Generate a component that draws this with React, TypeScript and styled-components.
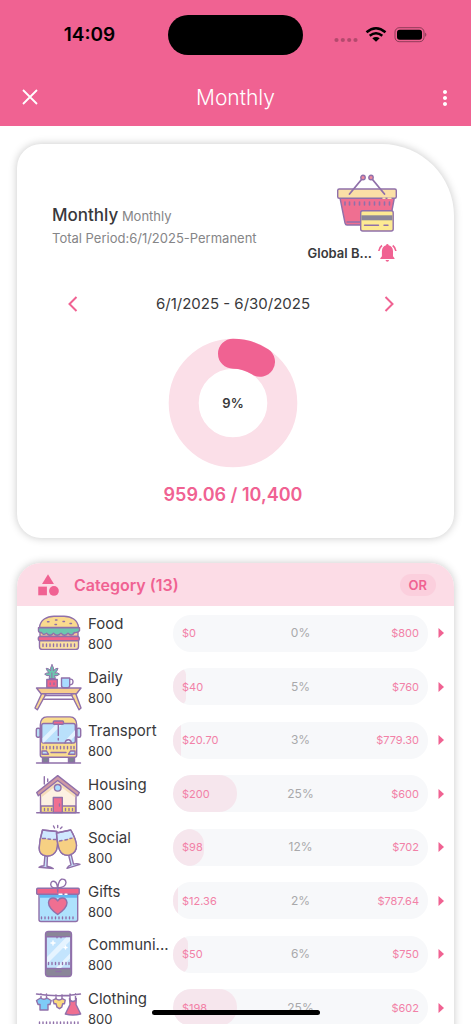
import React from "react";
import styled, { createGlobalStyle } from "styled-components";
import { MdCategory, MdMoreVert } from "react-icons/md";

const pink = "#f06292";
const ink = "#39393b";
const outline = "#9070aa";

const GlobalStyle = createGlobalStyle`
  *, *::before, *::after { box-sizing: border-box; }
  body {
    margin: 0;
    background: #fff;
    color: ${ink};
    font-family: Inter, "Liberation Sans", sans-serif;
  }
  button { border: 0; padding: 0; background: none; font: inherit; color: inherit; cursor: pointer; }
  h1, h2, h3, p, ul { margin: 0; padding: 0; }
  svg { display: block; flex: none; }
`;

const Screen = styled.div`
  display: flex;
  flex-direction: column;
  height: 100vh;
  overflow: hidden;
`;

const Header = styled.header`
  flex: none;
  background: ${pink};
`;

const StatusBar = styled.div`
  display: grid;
  grid-template-columns: 1fr 135px 1fr;
  align-items: center;
  height: 70px;
  color: #000;
`;

const Clock = styled.time`
  padding-left: 11px;
  text-align: center;
  font-size: 19px;
  line-height: 24px;
  font-weight: 600;
`;

const Island = styled.div`
  height: 40px;
  border-radius: 20px;
  background: #000;
`;

const StatusIcons = styled.div`
  display: flex;
  align-items: center;
  justify-content: flex-end;
  padding-right: 44px;
`;

const AppBar = styled.div`
  display: flex;
  align-items: center;
  justify-content: space-between;
  height: 56px;
  padding: 0 14px;
  color: #fff;
`;

const IconButton = styled.button<{ $width?: number; $align?: string }>`
  display: flex;
  flex: none;
  align-items: center;
  justify-content: ${(p) => p.$align ?? "center"};
  width: ${(p) => p.$width ?? 24}px;
  height: 24px;
`;

const Title = styled.h1`
  text-align: center;
  font-size: 21px;
  line-height: 28px;
  font-weight: 300;
`;

const Main = styled.main`
  display: flex;
  flex: 1;
  flex-direction: column;
  gap: 25px;
  min-height: 0;
  padding: 18px 17px 0;
  overflow-y: auto;
  scrollbar-width: none;
`;

const Card = styled.section`
  flex: none;
  border-radius: 24px;
  background: #fff;
  box-shadow: 0 0 8px rgba(0, 0, 0, 0.22);
`;

const SummaryCard = styled(Card)`
  display: flex;
  flex-direction: column;
  border-top-right-radius: 72px;
  padding: 30px 40px 31px 35px;
`;

const SummaryTop = styled.div`
  display: flex;
  align-items: center;
  justify-content: space-between;
  padding-right: 16px;
`;

const Heading = styled.div`
  padding-top: 16px;
  color: #858587;
  font-size: 13px;
  line-height: 22px;
`;

const BudgetName = styled.h2`
  display: inline;
  color: ${ink};
  font-size: 17px;
  font-weight: 500;
`;

const Scope = styled.div`
  display: flex;
  flex-direction: column;
  align-items: flex-end;
  gap: 8px;
`;

const ScopeLabel = styled.div`
  display: flex;
  align-items: center;
  gap: 5px;
  height: 18px;
  font-size: 13px;
  font-weight: 600;
`;

const PeriodNav = styled.nav`
  display: flex;
  align-items: center;
  justify-content: space-between;
  margin-top: 30px;
  padding: 0 10px;
  font-size: 15px;
  line-height: 24px;
`;

const DonutBox = styled.div`
  display: grid;
  place-items: center;
  margin-top: 22px;
  > * { grid-area: 1 / 1; }
`;

const DonutLabel = styled.span`
  font-size: 13px;
  line-height: 20px;
  font-weight: 600;
`;

const Total = styled.p`
  margin-top: 15px;
  text-align: center;
  color: ${pink};
  font-size: 18px;
  line-height: 24px;
  font-weight: 600;
`;

const CategoryHeader = styled.header`
  display: flex;
  align-items: center;
  height: 43px;
  padding: 0 18px;
  border-radius: 24px 24px 0 0;
  background: #fcdce6;
  color: ${pink};
`;

const CategoryTitle = styled.h2`
  flex: 1;
  padding-left: 13px;
  font-size: 16px;
  line-height: 20px;
  font-weight: 600;
`;

const OrButton = styled.button`
  height: 22px;
  padding: 0 9px;
  border-radius: 11px;
  background: #fbcfdd;
  font-size: 13px;
  font-weight: 600;
`;

const List = styled.ul`
  padding-bottom: 40px;
  list-style: none;
`;

const Row = styled.li`
  display: grid;
  grid-template-columns: 48px 87px 1fr 6px;
  align-items: center;
  height: 54px;
  padding: 0 10px 0 17px;

  &:nth-child(even) {
    height: 53px;
  }
`;

const RowText = styled.div`
  padding: 2px 0 0 6px;
  font-size: 13px;
  line-height: 20px;
  white-space: nowrap;
`;

const RowName = styled.h3`
  font-size: 15px;
  font-weight: 400;
`;

const Bar = styled.div`
  position: relative;
  display: grid;
  grid-template-columns: 1fr 1fr 1fr;
  align-items: center;
  height: 37px;
  margin: 0 10px 0 4px;
  padding: 0 9px;
  overflow: hidden;
  border-radius: 18px;
  background: #f7f8fa;
  isolation: isolate;
`;

const Fill = styled.span`
  position: absolute;
  z-index: -1;
  inset: 0 auto 0 0;
  border-radius: 18px;
  background: #f6e6ed;
`;

const Amount = styled.span<{ $end?: boolean }>`
  text-align: ${(p) => (p.$end ? "right" : "left")};
  color: #f281a7;
  font-size: 11px;
  line-height: 16px;
`;

const Percent = styled.span`
  text-align: center;
  color: #a9a9ab;
  font-size: 12px;
  line-height: 16px;
`;

const HomeIndicator = styled.div`
  position: fixed;
  bottom: 9px;
  left: 50%;
  width: 168px;
  height: 5px;
  border-radius: 3px;
  background: #000;
  transform: translateX(-50%);
`;

const Art = ({ size = 48, children }: { size?: number; children: React.ReactNode }) => (
  <svg
    width={size}
    height={size}
    viewBox={`0 0 ${size} ${size}`}
    fill="none"
    stroke={outline}
    strokeWidth="1.4"
    strokeLinecap="round"
    strokeLinejoin="round"
    aria-hidden="true"
  >
    {children}
  </svg>
);

const Basket = () => (
  <Art size={62}>
    <path d="M4 24h54.3l-5 27H11q-1.500 0-2-2z" fill="#ef6f91" />
    <path d="M11 48h14" />
    <rect x="1.700" y="15" width="58.600" height="9.300" rx="1.500" fill="#fbe0a6" />
    <path d="M9 28v3M13.500 28v3M18.500 28v3M23.500 28v3M28.500 28v3M33.500 28v3M38.500 28v3M43.500 28v3M48.500 28v3M53.500 28v3" strokeWidth="1.600" />
    <path d="M13.500 20 25.500 5.500M48.500 20 36.500 5.500" strokeWidth="1.800" />
    <circle cx="27" cy="3.500" r="2.200" fill="#f28a9e" />
    <circle cx="35" cy="3.500" r="2.200" fill="#f28a9e" />
    <path d="M47 24.300h2M52 24.300h3" stroke="#fbe0a6" />
    <rect x="24.700" y="36.700" width="32.500" height="20.300" rx="2" fill="#fdea92" />
    <path d="M25.400 41.300h31v5h-31z" fill="#8a8698" stroke="none" />
    <path d="M28.500 51.300h14M48 51.300h4" />
  </Art>
);

const Burger = () => (
  <Art>
    <path d="M5.500 18.500C6 11 13 7.200 20 7.200h10C37 7.200 44 11 44.500 18.500z" fill="#fadb8e" />
    <path d="M6 23h38v4.500H6z" fill="#fbc99a" />
    <path d="M4.500 18.700h41v3q-2 2.300-5 1.800-3 4.500-6.500.8-3.500 4-7 0-4 4-7.500 0-3.500 4-7 0-3.500 2.500-5-.8-3 .2-3-1.800z" fill="#6cc7ae" />
    <rect x="4.300" y="27.500" width="41" height="4.200" rx="2" fill="#f0648a" />
    <path d="M5.500 31.700h39v6q0 2.700-2.700 2.700H8.200q-2.700 0-2.700-2.700z" fill="#fbe0a0" />
    <path d="M13.500 12.700h1.500M21.500 11h1.500M21 15.500h1.500M29 12.500h1.500M36 14.500h1.500" />
    <path d="M9 35v2.500M12.500 35v2.500M16 35v2.500M19.500 35v2.500M23 35v2.500M26.500 35v2.500M30 35v2.500M33.500 35v2.500M37 35v2.500M40.500 35v2.500" />
  </Art>
);

const Table = () => (
  <Art>
    <path d="m8 30-7 15 2.300 1.800L12 31zM41.500 30l5.500 15-2 1.800L37 31z" fill="#fbd894" />
    <path d="M11 32.500h27M9 36.300h31" />
    <path d="M2.500 25h44.500l-4.500 5.700H7z" fill="#f7cd8d" />
    <path d="M18 1.800q2.400 3 1.300 6 2.500-3 4.700-2.500-.5 3-3.200 4.500 3.500-.3 4.700 1.400-2.500 2.300-5 1.500l1 2.800H15l.7-2.800q-3 .5-5-1.500 1.700-1.700 4.500-1.400-2.400-1.500-3-4.500 3 0 4.500 2.500-.8-3 1.300-6z" fill="#6cc7ae" strokeWidth="1" />
    <path d="M17.900 10v6" strokeWidth="1" />
    <path d="M12.800 16.500h10.500v8H12.800z" fill="#f0648a" />
    <path d="M16.200 20v1.500M20 20v1.500" />
    <path d="M35.500 16.300q3.500-.8 3.500 2.500t-4 3" />
    <path d="M27.500 15h8.200v7.500q0 2.300-2.300 2.300h-3.600q-2.300 0-2.300-2.300z" fill="#a9dcff" />
  </Art>
);

const Bus = () => (
  <Art>
    <path d="M2.500 47h44" />
    <path d="M8.500 41h6v5.500h-6zM34.500 41h6v5.500h-6z" fill="#7d8292" />
    <rect x="2.300" y="12.300" width="4" height="9" rx="1.500" fill="#b8def5" />
    <rect x="42.700" y="12.300" width="4" height="9" rx="1.500" fill="#b8def5" />
    <path d="M6.300 9Q6.500 1 13 .9h23q6.500.1 6.700 8.100V39q0 2.300-2.300 2.300H8.600Q6.300 41.300 6.300 39z" fill="#fadd8f" />
    <rect x="7.700" y="7.500" width="33.600" height="19.500" rx="2" fill="#b9e0fb" />
    <path d="M8.500 22 22 8.500h6L10 26.500H8.500zM30 26 41 14v6l-6 6z" fill="#e3f3ff" stroke="none" />
    <rect x="19.300" y="5" width="10.200" height="3.200" rx="1" fill="#f0648a" />
    <path d="M24.300 9v10.500M24.300 22.500v1.500M31 27q.5-3.500 3.500-3.300 2.500.2 3 3.300" />
    <path d="M9 30.500v2.200M12.500 30.500v2.200M16 30.500v2.200M19.500 30.500v2.200M23 30.500v2.200M26.500 30.500v2.200M30 30.500v2.200M33.500 30.500v2.200M37 30.500v2.200M40 30.500v2.200M17 36.500h15" />
    <path d="M8 35h4.500l2 3.200H8zM41 35h-4.500l-2 3.200H41z" fill="#b9e0fb" />
  </Art>
);

const House = () => (
  <Art>
    <path d="M10.300 14V6.800M13.700 11.500V9" />
    <path d="M6.500 22 23.700 9 42 22v20.500H6.500z" fill="#fdf1e2" />
    <path d="M7.200 24 23.700 11.500 41.300 24v3.500L23.700 14.500 7.200 27.500z" fill="#f6dcb8" stroke="none" />
    <path d="M7 36h34.500v6.500H7z" fill="#fbe07e" />
    <path d="M10.500 38.500v2M14 38.500v2M17.500 38.500v2M31.500 38.500v2M35 38.500v2M38.500 38.500v2" />
    <path d="M23.700 5.600 45.300 22.500l-1.500 3.300L23.700 10.500 4.300 25.800l-1.600-3.300z" fill="#cf9aa4" />
    <circle cx="23.700" cy="17.800" r="3.300" fill="#a9dcff" />
    <path d="M19.300 27.500h9v15h-9z" fill="#ef6f91" />
    <path d="M25.500 34v2M2.700 42.700h42.500" />
  </Art>
);

const Glasses = () => (
  <Art>
    <path d="m11 32 2.500.3-.5 11q4 .8 6.300 2.200L5 44.200q2-1.500 5-1.400zM34.500 31.500l2.500-.6 2.500 10.200q3.500-1 6.500.2l-13 4q1-2.500 4-3.500z" fill="#c9e2fa" />
    <path d="M8.500 7 22.800 8.500Q24.500 20 22.500 27 19.500 33.500 12.500 33 5 32 5.200 25 5.500 17 8.500 7z" fill="#cfe8ff" />
    <path d="M7 15.500 23.500 17q.2 7-1 10-3 6.500-10 6Q5 32 5.200 25q.3-5 1.800-9.500z" fill="#f6d083" stroke="none" />
    <path d="M8.500 7 22.800 8.500Q24.500 20 22.500 27 19.500 33.500 12.500 33 5 32 5.200 25 5.500 17 8.500 7z" />
    <path d="M22.500 10 36.800 7q4.700 8 5.700 15 .2 8-7 10-7 1.300-10-5.300Q23 20 22.500 10z" fill="#cfe8ff" />
    <path d="m23.500 18.500 16.300-4q2 4 2.700 7.500.2 8-7 10-7 1.300-10-5.300-1.500-4-2-8.200z" fill="#f6d083" stroke="none" />
    <path d="M22.500 10 36.800 7q4.700 8 5.700 15 .2 8-7 10-7 1.300-10-5.300Q23 20 22.500 10z" />
    <path d="M8.500 15.500h3M14 16l2.500.2M19.500 16.500h2.500M25.500 18l2.500-.5M31 17l2.500-.5M36 15.500l2-.4M19.500 3l1 2M23.700 2.500v2M28 4l-1.500 1.500" />
  </Art>
);

const Gift = () => (
  <Art>
    <path d="M5 17h38.700v25.500q0 2-2 2H7q-2 0-2-2z" fill="#aee2fd" />
    <path d="M5.700 17.500h37.300v3.300H5.700z" fill="#62b8f0" stroke="none" />
    <rect x="2.700" y="11.200" width="42.500" height="6" rx="1" fill="#f0648a" />
    <path d="M23.700 11Q17 11.500 16.700 7.500 17 3.500 20.500 4.500 24 6 23.700 15 23.500 4.500 27.500 2.200 31.500 1.500 32 5.500q-.3 5-8.300 5.500" />
    <path d="M23.700 37.500Q14.500 31 14.500 25.700q.5-4.700 4.700-4.700 3 0 4.500 3 1.500-3 4.500-3 4.200 0 4.800 4.700 0 5.300-9.300 11.800z" fill="#ef6f91" />
    <path d="M7.500 40v1.800M11 40v1.800M14.500 40v1.800M18 40v1.800M21.500 40v1.800M25 40v1.800M28.500 40v1.800M32 40v1.800M35.500 40v1.800M39 40v1.800" />
    <path d="M25 17.200h3M31 17.200h2" stroke="#fff" />
  </Art>
);

const Phone = () => (
  <Art>
    <rect x="11.500" y="1.500" width="26" height="45" rx="3" fill="#8a8698" />
    <path d="M12.200 6.700h24.600v31.800H12.200z" fill="#c3e4fd" />
    <path d="M13 27 32 7.500h4V11L13 34zM22 38 36 23.500v5L27 38z" fill="#e6f4ff" stroke="none" />
    <path d="M19 11v4M17 13h4M31.500 16v3M30 17.500h3" stroke="#fff" />
    <path d="M14.500 32.500v2M18 32.500v2M21.500 32.500v2M25 32.500v2M28.500 32.500v2M32 32.500v2M35 32.500v2M22 41.500h5M23 6.700v1M27 6.700v1" />
  </Art>
);

const Clothes = () => (
  <Art>
    <path d="M2.500 10q22 3.500 44 0M7 10v4M12.500 10v4M22 11v4M28 11v4M36 10v5M41.500 10v5" />
    <path d="m6.500 14-4 2.500 1.500 4h2V26h8v-5.500h2l1.200-4-4.200-2.500q-3 2.500-6.500 0z" fill="#7ecbf7" />
    <path d="m22 14.700-3 1.500 1 3.500h2l1 3.500 2.500 1.500 2.200-1.500 1-3.500h1.800l.7-3.500-3-1.500q-3.200 2.500-6.200 0z" fill="#fbd97e" />
    <path d="m35.500 14.500.5 6-4.700 9.500q7.500 2 15.400 0L42 20.500l.3-6q-1 3-3.500 3t-3.300-3z" fill="#ef6f91" />
    <path d="M5.500 38v2M9 38v2M12.500 38v2M16 38v2M19.500 38v2M23 38v2M26.500 38v2M30 38v2M33.500 38v2M37 38v2M40.500 38v2M44 38v2" />
  </Art>
);

const Bell = () => (
  <svg width="21" height="20" viewBox="0 0 21 20" fill={pink} aria-hidden="true">
    <path d="M10.300 1q1.200 0 1.300 1.300Q15.700 3.300 16 8v5.300l1.500 1.900v.9H3.300v-.9L4.900 13.300V8q.3-4.700 4.200-5.700Q9.200 1 10.300 1z" />
    <path d="M8.500 17h3.600q-.3 1.800-1.800 1.800T8.500 17z" />
    <path d="M1.800 8Q2.100 4.600 5 2.500M18.900 8Q18.600 4.600 15.700 2.500" fill="none" stroke={pink} strokeWidth="1.600" />
  </svg>
);

const Chevron = ({ d }: { d: string }) => (
  <svg width="24" height="24" viewBox="0 0 24 24" fill="none" stroke={pink} strokeWidth="2" aria-hidden="true">
    <path d={d} />
  </svg>
);

const categories = [
  { name: "Food", icon: Burger, spent: "0", left: "800", percent: 0 },
  { name: "Daily", icon: Table, spent: "40", left: "760", percent: 5 },
  { name: "Transport", icon: Bus, spent: "20.70", left: "779.30", percent: 3 },
  { name: "Housing", icon: House, spent: "200", left: "600", percent: 25 },
  { name: "Social", icon: Glasses, spent: "98", left: "702", percent: 12 },
  { name: "Gifts", icon: Gift, spent: "12.36", left: "787.64", percent: 2 },
  { name: "Communi...", icon: Phone, spent: "50", left: "750", percent: 6 },
  { name: "Clothing", icon: Clothes, spent: "198", left: "602", percent: 25 },
];

export default function App() {
  return (
    <Screen>
      <GlobalStyle />
      <Header>
        <StatusBar>
          <Clock>14:09</Clock>
          <Island />
          <StatusIcons>
            <svg width="94" height="20" viewBox="0 0 94 20" aria-hidden="true">
              <g fill="#000" fillOpacity="0.25">
                <circle cx="3.500" cy="15" r="2.100" />
                <circle cx="9.800" cy="15" r="2.100" />
                <circle cx="16.200" cy="15" r="2.100" />
                <circle cx="22.500" cy="15" r="2.100" />
              </g>
              <g fill="none" stroke="#000" strokeWidth="2.500">
                <path d="M33.500 7.300Q43 -.8 52.500 7.300" />
                <path d="M36.700 10.700Q43 5.700 49.300 10.700" />
              </g>
              <path d="M39.300 13.300Q43 10.700 46.700 13.300L43 16.800z" />
              <rect x="62" y="2.700" width="29" height="14" rx="4.300" fill="none" stroke="#000" strokeOpacity="0.4" />
              <rect x="64" y="4.700" width="25" height="10" rx="2.700" />
              <path d="M92.300 7.500q2 2.200 0 4.400z" fillOpacity="0.5" />
            </svg>
          </StatusIcons>
        </StatusBar>
        <AppBar>
          <IconButton $width={32} aria-label="Close">
            <svg width="24" height="24" viewBox="0 0 24 24" stroke="#fff" strokeWidth="1.800" aria-hidden="true">
              <path d="m5 4 14 14M19 4l-14 14" />
            </svg>
          </IconButton>
          <Title>Monthly</Title>
          <IconButton $width={32} $align="flex-end" aria-label="More options">
            <MdMoreVert size={24} />
          </IconButton>
        </AppBar>
      </Header>
      <Main>
        <SummaryCard>
          <SummaryTop>
            <Heading>
              <BudgetName>Monthly</BudgetName> Monthly
              <p>Total Period:6/1/2025-Permanent</p>
            </Heading>
            <Scope>
              <Basket />
              <ScopeLabel>
                Global B...
                <Bell />
              </ScopeLabel>
            </Scope>
          </SummaryTop>
          <PeriodNav aria-label="Period">
            <IconButton aria-label="Previous period">
              <Chevron d="m14.500 5-7 7 7 7" />
            </IconButton>
            <span>6/1/2025 - 6/30/2025</span>
            <IconButton aria-label="Next period">
              <Chevron d="m5.500 5 7 7-7 7" />
            </IconButton>
          </PeriodNav>
          <DonutBox>
            <svg width="130" height="130" viewBox="0 0 130 130" fill="none" strokeWidth="30" aria-hidden="true">
              <circle cx="65" cy="65" r="49.300" stroke="#fbdfe8" />
              <path d="M65 15.700A49.300 49.300 0 0 1 92 23.750" stroke={pink} strokeLinecap="round" />
            </svg>
            <DonutLabel>9%</DonutLabel>
          </DonutBox>
          <Total>959.06 / 10,400</Total>
        </SummaryCard>
        <Card>
          <CategoryHeader>
            <MdCategory size={26} />
            <CategoryTitle>Category (13)</CategoryTitle>
            <OrButton>OR</OrButton>
          </CategoryHeader>
          <List>
            {categories.map(({ name, icon: Icon, spent, left, percent }) => (
              <Row key={name}>
                <Icon />
                <RowText>
                  <RowName>{name}</RowName>
                  <p>800</p>
                </RowText>
                <Bar>
                  <Fill style={{ width: `${percent}%` }} />
                  <Amount>${spent}</Amount>
                  <Percent>{percent}%</Percent>
                  <Amount $end>${left}</Amount>
                </Bar>
                <svg width="6" height="10" viewBox="0 0 6 10" fill={pink} aria-hidden="true">
                  <path d="M.5 0 6 5 .5 10z" />
                </svg>
              </Row>
            ))}
          </List>
        </Card>
      </Main>
      <HomeIndicator />
    </Screen>
  );
}
